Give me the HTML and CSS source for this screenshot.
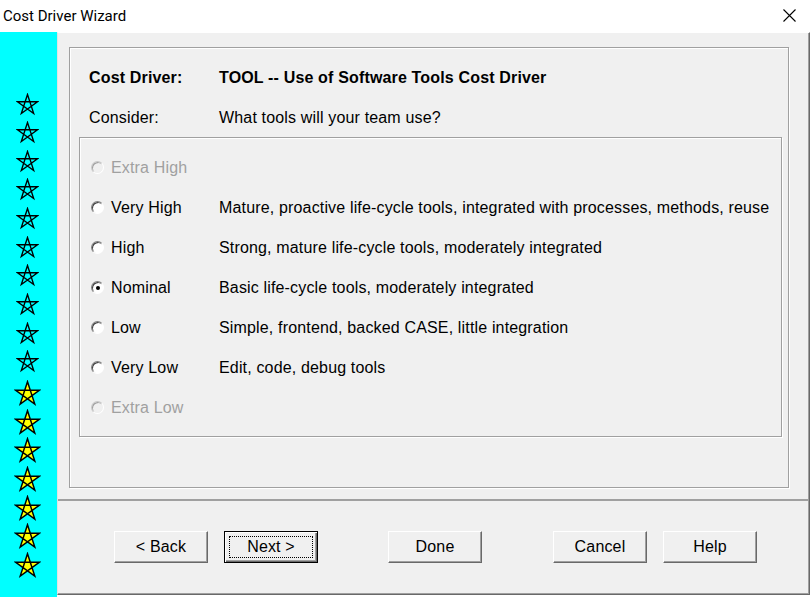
FILE: index.html
```html
<!DOCTYPE html>
<html>
<head>
<meta charset="utf-8">
<title>Cost Driver Wizard</title>
<link rel="stylesheet" href="styles.css">
</head>
<body>
<svg class="defs" width="0" height="0" aria-hidden="true">
  <defs>
    <symbol id="star" viewBox="0 0 24 24">
      <path d="M12 1.5 L18.47 21.4 L1.54 9.1 L22.46 9.1 L5.53 21.4 Z" fill="none" stroke="#000" stroke-width="1.4" stroke-linejoin="miter"/>
    </symbol>
    <symbol id="ystar" viewBox="0 0 24 24">
      <path d="M12 1.5 L18.47 21.4 L1.54 9.1 L22.46 9.1 L5.53 21.4 Z" fill="#ffff00" fill-rule="nonzero" stroke="#000" stroke-width="1.3" stroke-linejoin="miter"/>
    </symbol>
  </defs>
</svg>
<div class="window">
  <div class="titlebar">
    <span class="title">Cost Driver Wizard</span>
    <svg class="close" width="13" height="13" viewBox="0 0 13 13"><path d="M0.5 0.5 L12.5 12.5 M12.5 0.5 L0.5 12.5" stroke="#000" stroke-width="1.1" fill="none"/></svg>
  </div>
  <div class="body">
    <div class="sidebar">
      <div class="slot"><svg class="s-out"><use href="#star"/></svg></div>
      <div class="slot"><svg class="s-out"><use href="#star"/></svg></div>
      <div class="slot"><svg class="s-out"><use href="#star"/></svg></div>
      <div class="slot"><svg class="s-out"><use href="#star"/></svg></div>
      <div class="slot"><svg class="s-out"><use href="#star"/></svg></div>
      <div class="slot"><svg class="s-out"><use href="#star"/></svg></div>
      <div class="slot"><svg class="s-out"><use href="#star"/></svg></div>
      <div class="slot"><svg class="s-out"><use href="#star"/></svg></div>
      <div class="slot"><svg class="s-out"><use href="#star"/></svg></div>
      <div class="slot"><svg class="s-out"><use href="#star"/></svg></div>
      <div class="slot first-yellow"><svg class="s-yel"><use href="#ystar"/></svg></div>
      <div class="slot"><svg class="s-yel"><use href="#ystar"/></svg></div>
      <div class="slot"><svg class="s-yel"><use href="#ystar"/></svg></div>
      <div class="slot"><svg class="s-yel"><use href="#ystar"/></svg></div>
      <div class="slot"><svg class="s-yel"><use href="#ystar"/></svg></div>
      <div class="slot"><svg class="s-yel"><use href="#ystar"/></svg></div>
      <div class="slot"><svg class="s-yel"><use href="#ystar"/></svg></div>
    </div>
    <div class="panel">
      <div class="top">
        <div class="frame">
          <div class="hrow bold"><span class="hlabel">Cost Driver:</span><span>TOOL -- Use of Software Tools Cost Driver</span></div>
          <div class="hrow"><span class="hlabel">Consider:</span><span>What tools will your team use?</span></div>
          <div class="group">
            <div class="opt disabled"><span class="radio"></span><span class="olabel">Extra High</span></div>
            <div class="opt"><span class="radio"></span><span class="olabel">Very High</span><span class="desc">Mature, proactive life-cycle tools, integrated with processes, methods, reuse</span></div>
            <div class="opt"><span class="radio"></span><span class="olabel">High</span><span class="desc">Strong, mature life-cycle tools, moderately integrated</span></div>
            <div class="opt"><span class="radio checked"></span><span class="olabel">Nominal</span><span class="desc">Basic life-cycle tools, moderately integrated</span></div>
            <div class="opt"><span class="radio"></span><span class="olabel">Low</span><span class="desc">Simple, frontend, backed CASE, little integration</span></div>
            <div class="opt"><span class="radio"></span><span class="olabel">Very Low</span><span class="desc">Edit, code, debug tools</span></div>
            <div class="opt disabled"><span class="radio"></span><span class="olabel">Extra Low</span></div>
          </div>
        </div>
      </div>
      <div class="bottom">
        <button class="btn">&lt; Back</button>
        <button class="btn default next">Next &gt;</button>
        <button class="btn done">Done</button>
        <button class="btn cancel">Cancel</button>
        <button class="btn help">Help</button>
      </div>
    </div>
  </div>
</div>
</body>
</html>
```
FILE: styles.css
```css
* { box-sizing: border-box; }
html, body {
  margin: 0;
  padding: 0;
  width: 812px;
  height: 597px;
  overflow: hidden;
  background: #fff;
}
.defs { position: absolute; width: 0; height: 0; }
.window {
  width: 812px;
  height: 597px;
  display: flex;
  flex-direction: column;
  font-family: "Liberation Sans", Arial, sans-serif;
  font-size: 16px;
  letter-spacing: 0.16px;
  color: #000;
}
.titlebar {
  height: 32px;
  flex: none;
  display: flex;
  align-items: center;
  justify-content: space-between;
  padding: 0 16px 0 3px;
  background: #fff;
}
.title {
  font-family: Roboto, "Noto Sans", sans-serif;
  font-size: 15px;
  letter-spacing: 0;
  color: #000;
  margin-top: -1px;
}
.close { display: block; margin-top: -1px; }
.body {
  flex: 1;
  display: flex;
  align-items: flex-start;
}
.sidebar {
  width: 57px;
  height: 565px;
  background: #00ffff;
  display: flex;
  flex-direction: column;
  align-items: center;
  padding-top: 57.7px;
  padding-right: 3px;
  flex: none;
}
.slot {
  height: 28.67px;
  width: 100%;
  display: flex;
  align-items: center;
  justify-content: center;
  flex: none;
}
.first-yellow { margin-top: 3px; }
.s-out { width: 23px; height: 23px; display: block; }
.s-yel { width: 27px; height: 27px; display: block; }
.panel {
  width: 753px;
  height: 563px;
  flex: none;
  background: #f0f0f0;
  border-top: 1px solid #fff;
  border-left: 1px solid #e3e3e3;
  border-right: 1px solid #696969;
  border-bottom: 1px solid #696969;
  box-shadow: inset -1px -1px 0 #a0a0a0;
  display: flex;
  flex-direction: column;
}
.top {
  height: 468px;
  flex: none;
  padding: 14px 0 0 11px;
  border-bottom: 2px solid #a0a0a0;
}
.frame {
  width: 720px;
  height: 441px;
  border: 1px solid #a0a0a0;
  box-shadow: inset 1px 1px 0 #fff, 1px 1px 0 #fff;
  padding: 9px 0 0 0;
}
.hrow {
  height: 40px;
  line-height: 40px;
  display: flex;
  padding-left: 19px;
  padding-top: 1px;
  white-space: nowrap;
}
.hrow span { height: 39px; }
.bold { font-weight: bold; }
.hlabel { width: 130px; flex: none; }
.group {
  margin-left: 9px;
  width: 703px;
  height: 300px;
  border: 1px solid #a0a0a0;
  box-shadow: inset 1px 1px 0 #fff, 1px 1px 0 #fff;
  padding: 9px 0 0 11px;
}
.opt {
  height: 40px;
  display: flex;
  align-items: center;
  white-space: nowrap;
  line-height: 40px;
  padding-top: 2px;
}
.radio {
  width: 13px;
  height: 13px;
  flex: none;
  border-radius: 50%;
  border: 1px solid;
  border-color: #808080 #fff #fff #808080;
  background: #fff;
  box-shadow: inset 1px 1px 0 #404040;
  margin-right: 7px;
  margin-top: -1px;
  position: relative;
}
.radio.checked::after {
  content: "";
  position: absolute;
  left: 3.5px;
  top: 3.5px;
  width: 4px;
  height: 4px;
  border-radius: 50%;
  background: #000;
}
.olabel { width: 108px; flex: none; }
.desc { flex: none; }
.disabled { color: #a0a0a0; }
.disabled .radio {
  background: #f0f0f0;
  box-shadow: inset 1px 1px 0 #a0a0a0;
  border-color: #c8c8c8 #fff #fff #c8c8c8;
}
.bottom {
  flex: 1;
  display: flex;
  align-items: flex-start;
  padding: 30px 0 0 56px;
}
.btn {
  width: 94px;
  height: 32px;
  flex: none;
  font-family: "Liberation Sans", Arial, sans-serif;
  font-size: 16px;
  letter-spacing: 0.16px;
  color: #000;
  background: #f0f0f0;
  border: 1px solid;
  border-color: #fff #696969 #696969 #fff;
  box-shadow: inset -1px -1px 0 #a0a0a0;
  padding: 0;
  margin: 0;
  position: relative;
}
.btn.default {
  border-color: #000;
  box-shadow: inset 1px 1px 0 #fff, inset -1px -1px 0 #696969, inset -2px -2px 0 #a0a0a0;
}
.btn.default::after {
  content: "";
  position: absolute;
  left: 4px;
  top: 4px;
  right: 4px;
  bottom: 4px;
  border: 1px dotted #000;
}
.next { margin-left: 16px; }
.done { margin-left: 70px; }
.cancel { margin-left: 71px; }
.help { margin-left: 16px; }
```
